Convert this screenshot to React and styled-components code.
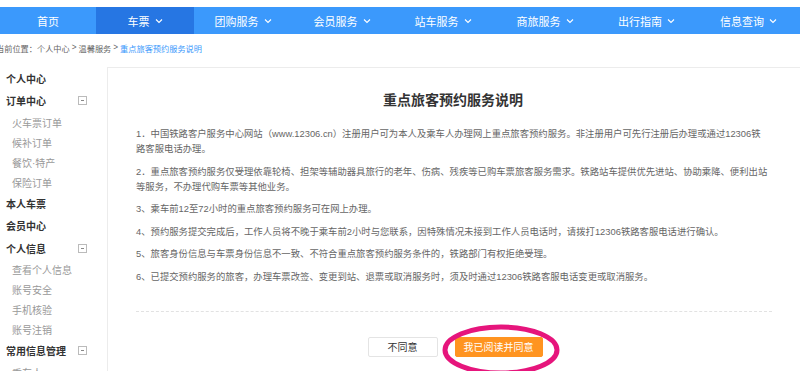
import React from "react";
import styled, { createGlobalStyle } from "styled-components";

const Global = createGlobalStyle`
  html, body { margin: 0; padding: 0; background: #fff; }
  body {
    font-family: "Liberation Sans", "Noto Sans CJK SC", sans-serif;
    width: 800px; height: 371px; overflow: hidden;
  }
  * { box-sizing: border-box; }
`;

const Page = styled.div`
  position: relative;
  width: 800px;
  height: 371px;
  overflow: hidden;
  padding-top: 7px;
`;

const Nav = styled.nav`
  display: grid;
  grid-template-columns: 96px 98px 98px 100px 102px 102px 101px 1fr;
  height: 27px;
  background: #3b99fc;
`;

const NavItem = styled.div`
  display: flex;
  align-items: center;
  justify-content: center;
  gap: 5px;
  color: #fff;
  font-size: 11px;
  background: ${(p) => (p.$active ? "#2676e3" : "transparent")};
`;

const Chevron = () => (
  <svg width="8" height="6" viewBox="0 0 8 6" fill="none">
    <path d="M1 1.5L4 4.5L7 1.5" stroke="#fff" strokeWidth="1.1" />
  </svg>
);

const Crumb = styled.div`
  height: 27px;
  display: flex;
  align-items: center;
  margin-left: -4px;
  font-size: 8.2px;
  color: #666;
  gap: 2px;
`;

const CrumbCurrent = styled.span`
  color: #3b99fc;
`;

const Main = styled.div`
  display: flex;
  margin-top: 6px;
`;

const Side = styled.aside`
  width: 107px;
  flex-shrink: 0;
  padding-left: 6px;
`;

const SideHead = styled.div`
  display: flex;
  align-items: center;
  justify-content: space-between;
  height: 22.5px;
  padding-right: 20px;
  font-size: 10px;
  font-weight: bold;
  color: #333;
`;

const Toggle = styled.span`
  width: 9px;
  height: 9px;
  border: 1px solid #bbb;
  position: relative;
  &::after {
    content: "";
    position: absolute;
    left: 2px;
    top: 3px;
    width: 3px;
    height: 1px;
    background: #888;
  }
`;

const SideSub = styled.div`
  height: 20px;
  display: flex;
  align-items: center;
  padding-left: 6px;
  font-size: 10px;
  color: #999;
`;

const Panel = styled.section`
  flex: 1;
  border-top: 1px solid #ececec;
  border-left: 1px solid #ececec;
  height: 320px;
  padding: 22px 0 0 28px;
`;

const Title = styled.h1`
  margin: 0 0 17px;
  text-align: center;
  font-size: 14px;
  line-height: 20px;
  font-weight: bold;
  color: #333;
  padding-right: 30px;
`;

const Para = styled.p`
  margin: 0 32px 7.5px 0;
  font-size: 9.35px;
  line-height: 15px;
  color: #666;
`;

const Divider = styled.div`
  border-top: 1px dashed #e2e2e2;
  margin-top: 26px;
  margin-right: 28px;
`;

const Actions = styled.div`
  display: flex;
  justify-content: center;
  gap: 17px;
  margin-top: 25px;
  padding-right: 26px;
`;

const Btn = styled.button`
  height: 20px;
  min-width: ${(p) => (p.$primary ? "81px" : "70px")};
  padding: 0 8px;
  font-family: inherit;
  font-size: 10px;
  border-radius: 2px;
  border: 1px solid ${(p) => (p.$primary ? "#ff9420" : "#e4e4e4")};
  background: ${(p) => (p.$primary ? "#ff9420" : "#fff")};
  color: ${(p) => (p.$primary ? "#fff" : "#333")};
`;

const Mark = styled.svg`
  position: absolute;
  left: 440px;
  top: 322px;
  pointer-events: none;
`;

const navItems = ["首页", "车票", "团购服务", "会员服务", "站车服务", "商旅服务", "出行指南", "信息查询"];

const paras = [
  "1．中国铁路客户服务中心网站（www.12306.cn）注册用户可为本人及乘车人办理网上重点旅客预约服务。非注册用户可先行注册后办理或通过12306铁路客服电话办理。",
  "2．重点旅客预约服务仅受理依靠轮椅、担架等辅助器具旅行的老年、伤病、残疾等已购车票旅客服务需求。铁路站车提供优先进站、协助乘降、便利出站等服务，不办理代购车票等其他业务。",
  "3、乘车前12至72小时的重点旅客预约服务可在网上办理。",
  "4、预约服务提交完成后，工作人员将不晚于乘车前2小时与您联系，因特殊情况未接到工作人员电话时，请拨打12306铁路客服电话进行确认。",
  "5、旅客身份信息与车票身份信息不一致、不符合重点旅客预约服务条件的，铁路部门有权拒绝受理。",
  "6、已提交预约服务的旅客，办理车票改签、变更到站、退票或取消服务时，须及时通过12306铁路客服电话变更或取消服务。",
];

export default function App() {
  return (
    <>
      <Global />
      <Page>
        <Nav>
          {navItems.map((t, i) => (
            <NavItem key={t} $active={i === 1}>
              {t}
              {i > 0 && <Chevron />}
            </NavItem>
          ))}
        </Nav>
        <Crumb>
          <span>当前位置：个人中心</span>
          <span>&gt;</span>
          <span>温馨服务</span>
          <span>&gt;</span>
          <CrumbCurrent>重点旅客预约服务说明</CrumbCurrent>
        </Crumb>
        <Main>
          <Side>
            <SideHead>个人中心</SideHead>
            <SideHead>订单中心<Toggle /></SideHead>
            <SideSub>火车票订单</SideSub>
            <SideSub>候补订单</SideSub>
            <SideSub>餐饮·特产</SideSub>
            <SideSub>保险订单</SideSub>
            <SideHead>本人车票</SideHead>
            <SideHead>会员中心</SideHead>
            <SideHead>个人信息<Toggle /></SideHead>
            <SideSub>查看个人信息</SideSub>
            <SideSub>账号安全</SideSub>
            <SideSub>手机核验</SideSub>
            <SideSub>账号注销</SideSub>
            <SideHead>常用信息管理<Toggle /></SideHead>
            <SideSub>乘车人</SideSub>
          </Side>
          <Panel>
            <Title>重点旅客预约服务说明</Title>
            {paras.map((p) => (
              <Para key={p}>{p}</Para>
            ))}
            <Divider />
            <Actions>
              <Btn>不同意</Btn>
              <Btn $primary>我已阅读并同意</Btn>
            </Actions>
          </Panel>
        </Main>
        <Mark width="122" height="56" viewBox="0 0 122 56">
          <ellipse cx="61" cy="28" rx="56" ry="23" fill="none" stroke="#e6157c" strokeWidth="5" />
        </Mark>
      </Page>
    </>
  );
}
